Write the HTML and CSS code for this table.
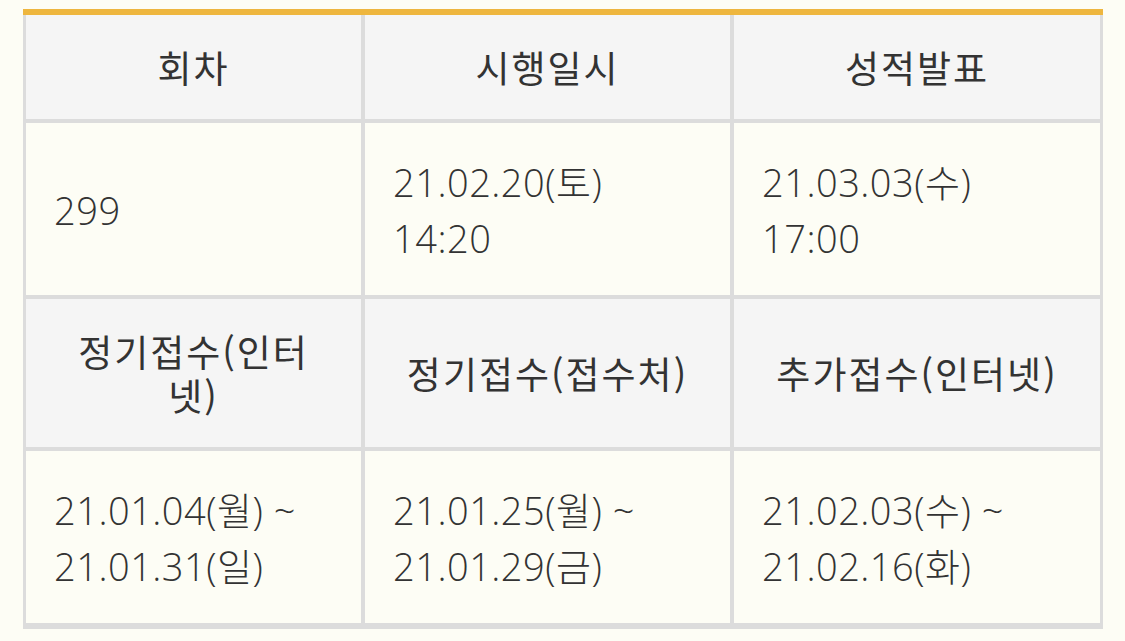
FILE: index.html
```html
<!DOCTYPE html>
<html lang="ko">
<head>
<meta charset="utf-8">
<title>시험일정</title>
<link rel="stylesheet" href="styles.css">
</head>
<body>
<div class="schedule">
  <div class="cell head">회차</div>
  <div class="cell head">시행일시</div>
  <div class="cell head">성적발표</div>

  <div class="cell data">299</div>
  <div class="cell data">21.02.20(토)<br>14:20</div>
  <div class="cell data">21.03.03(수)<br>17:00</div>

  <div class="cell head">정기접수(인터넷)</div>
  <div class="cell head">정기접수(접수처)</div>
  <div class="cell head">추가접수(인터넷)</div>

  <div class="cell data">21.01.04(월) ~<br>21.01.31(일)</div>
  <div class="cell data">21.01.25(월) ~<br>21.01.29(금)</div>
  <div class="cell data">21.02.03(수) ~<br>21.02.16(화)</div>
</div>
</body>
</html>
```
FILE: styles.css
```css
html, body {
  margin: 0;
  padding: 0;
  background: #fdfdf5;
}
body {
  font-family: "Open Sans", "Noto Sans CJK KR", sans-serif;
  color: #333333;
}
.schedule {
  margin: 9px 0 0 23px;
  width: 1080px;
  box-sizing: border-box;
  display: grid;
  grid-template-columns: 335px 365px 366px;
  grid-template-rows: 104px 172px 148px 172px;
  gap: 4px;
  background: #dcdcdc;
  border-top: 6px solid #eeb63e;
  padding: 0 3px 6px 3px;
}
.cell {
  box-sizing: border-box;
  display: flex;
  align-items: center;
}
.head {
  background: #f5f5f5;
  justify-content: center;
  text-align: center;
  font-size: 37px;
  line-height: 44px;
  letter-spacing: 2px;
  padding: 0 40px;
  font-family: "Noto Sans CJK KR", sans-serif;
  color: #333;
}
.data {
  background: #fdfdf5;
  font-size: 38px;
  line-height: 56px;
  font-weight: 300;
  letter-spacing: 0.5px;
  padding: 2px 28px 0 28px;
}
```
